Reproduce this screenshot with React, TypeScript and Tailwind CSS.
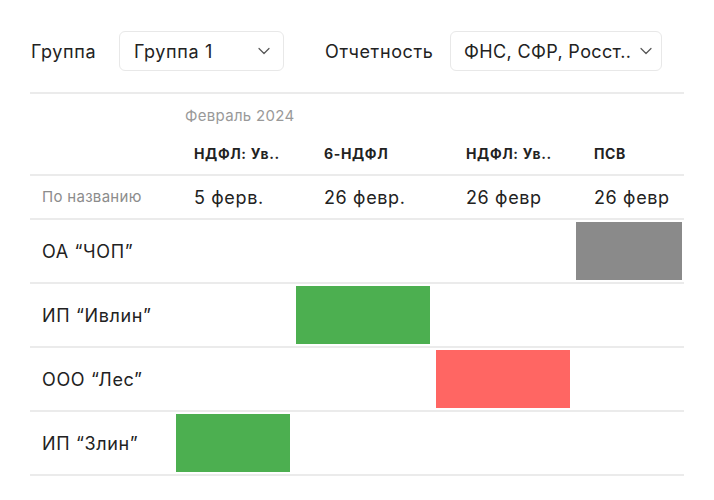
import React from "react";

const Chevron = () => (
  <svg width="12" height="8" viewBox="0 0 12 8" fill="none" className="shrink-0">
    <path d="M1 1.5L6 6.5L11 1.5" stroke="#555" strokeWidth="1.2" strokeLinecap="round" strokeLinejoin="round" />
  </svg>
);

const cols = [
  { w: "w-[120px]", pl: "pl-[21px]" },
  { w: "w-[140px]", pl: "pl-[31px]" },
  { w: "w-[140px]", pl: "pl-[33px]" },
  { w: "w-[111px]", pl: "pl-[21px]" },
];

const headers = ["НДФЛ: Ув..", "6-НДФЛ", "НДФЛ: Ув..", "ПСВ"];
const dates = ["5 ферв.", "26 февр.", "26 февр", "26 февр"];

const rows: { name: string; col: number; color: string }[] = [
  { name: "ОА “ЧОП”", col: 3, color: "bg-[#8a8a8a]" },
  { name: "ИП “Ивлин”", col: 1, color: "bg-[#4caf50]" },
  { name: "ООО “Лес”", col: 2, color: "bg-[#ff6663]" },
  { name: "ИП “Злин”", col: 0, color: "bg-[#4caf50]" },
];

export default function App() {
  return (
    <div className="w-[714px] h-[500px] bg-white text-[#222] px-[30px] pt-[31px] tracking-[0.04em]" style={{ fontFamily: "Inter, 'Noto Sans', sans-serif" }}>
      <div className="flex items-center h-10">
        <span className="text-[18px] ml-px w-[66px] whitespace-nowrap">Группа</span>
        <div className="ml-[22px] w-[165px] h-10 border border-[#e8e8e8] rounded-md flex items-center justify-between pl-[14px] pr-[13px] text-[18px]">
          <span>Группа 1</span>
          <Chevron />
        </div>
        <span className="ml-[41px] text-[18px] w-[112px] whitespace-nowrap">Отчетность</span>
        <div className="ml-[13px] w-[212px] h-10 border border-[#e8e8e8] rounded-md flex items-center justify-between pl-[13px] pr-[9px] text-[18px] tracking-[0.02em]">
          <span className="whitespace-nowrap">ФНС, СФР, Росст..</span>
          <Chevron />
        </div>
      </div>

      <div className="mt-[21px] border-t-2 border-[#ebebeb]">
        <div className="flex h-[82px] border-b-2 border-[#ebebeb]">
          <div className="w-[143px]" />
          <div className="flex flex-col">
            <div className="pl-[12px] pt-[11px] text-[15px] tracking-[0.02em] text-[#999] h-[40px]">Февраль 2024</div>
            <div className="flex h-[42px] items-center">
              {headers.map((h, i) => (
                <div key={i} className={`${cols[i].w} ${cols[i].pl} text-[14px] font-bold`}>{h}</div>
              ))}
            </div>
          </div>
        </div>
        <div className="flex h-[44px] items-center border-b-2 border-[#ebebeb]">
          <div className="w-[143px] pl-[12px] text-[15px] tracking-[0.02em] text-[#8c8c8c] whitespace-nowrap">По названию</div>
          {dates.map((d, i) => (
            <div key={i} className={`${cols[i].w} ${cols[i].pl} text-[18px]`}>{d}</div>
          ))}
        </div>
        {rows.map((r, ri) => (
          <div key={ri} className="flex h-[64px] border-b-2 border-[#ebebeb]">
            <div className="w-[143px] pl-[12px] text-[18px] flex items-center">{r.name}</div>
            {cols.map((c, ci) => (
              <div key={ci} className={`${c.w} py-[2px] pl-[3px] ${ci === 3 ? "pr-[2px]" : "pr-[3px]"}`}>
                {ci === r.col && <div className={`h-full ${r.color}`} />}
              </div>
            ))}
          </div>
        ))}
      </div>
    </div>
  );
}
